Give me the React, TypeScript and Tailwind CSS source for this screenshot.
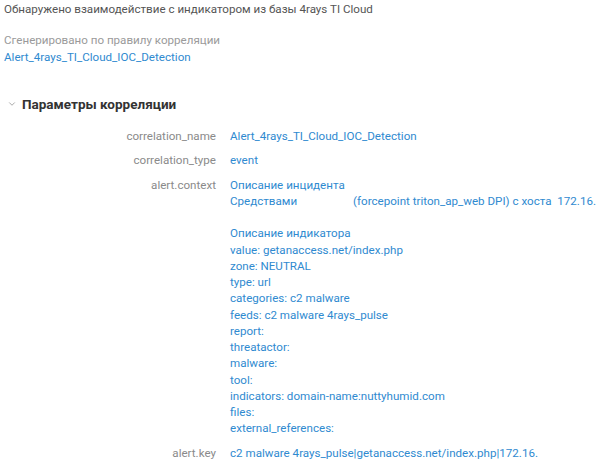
import React from 'react';
import { ChevronDown } from 'lucide-react';

const rows: { label: string; lines: string[] }[] = [
  { label: 'correlation_name', lines: ['Alert_4rays_TI_Cloud_IOC_Detection'] },
  { label: 'correlation_type', lines: ['event'] },
];

const contextLines = [
  'Описание индикатора',
  'value: getanaccess.net/index.php',
  'zone: NEUTRAL',
  'type: url',
  'categories: c2 malware',
  'feeds: c2 malware 4rays_pulse',
  'report:',
  'threatactor:',
  'malware:',
  'tool:',
  'indicators: domain-name:nuttyhumid.com',
  'files:',
  'external_references:',
];

const Label = ({ children }: { children: React.ReactNode }) => (
  <div className="w-[212px] shrink-0 text-right text-[#8a8a8a]">{children}</div>
);

const App: React.FC = () => {
  return (
    <div className="min-h-[475px] bg-white pl-1 pt-px text-[11.6px] leading-[16.25px] font-['Roboto','Liberation_Sans',sans-serif]">
      <div className="text-[#555]">Обнаружено взаимодействие с индикатором из базы 4rays TI Cloud</div>

      <div className="mt-[15px] text-[#9a9a9a]">Сгенерировано по правилу корреляции</div>
      <div className="text-[#2f8ad0]">Alert_4rays_TI_Cloud_IOC_Detection</div>

      <div className="mt-[31px] flex items-center gap-[5px] pl-[3px]">
        <ChevronDown className="h-[10px] w-[10px] text-[#999]" strokeWidth={2} />
        <span className="text-[13.5px] font-bold text-[#333]">Параметры корреляции</span>
      </div>

      <div className="mt-[16px] flex flex-col gap-2">
        {rows.map((r) => (
          <div key={r.label} className="flex gap-[14px]">
            <Label>{r.label}</Label>
            <div className="text-[#2f8ad0]">{r.lines.join('')}</div>
          </div>
        ))}

        <div className="flex gap-[14px]">
          <Label>alert.context</Label>
          <div className="text-[#2f8ad0]">
            <div>Описание инцидента</div>
            <div className="whitespace-pre">
              Средствами<span className="inline-block w-[56px]"></span>(forcepoint triton_ap_web DPI) с хоста  172.16.
            </div>
            <div>&nbsp;</div>
            {contextLines.map((l, i) => (
              <div key={i}>{l}</div>
            ))}
          </div>
        </div>

        <div className="flex gap-[14px]">
          <Label>alert.key</Label>
          <div className="text-[#2f8ad0]">c2 malware 4rays_pulse|getanaccess.net/index.php|172.16.</div>
        </div>
      </div>
    </div>
  );
};

export default App;
